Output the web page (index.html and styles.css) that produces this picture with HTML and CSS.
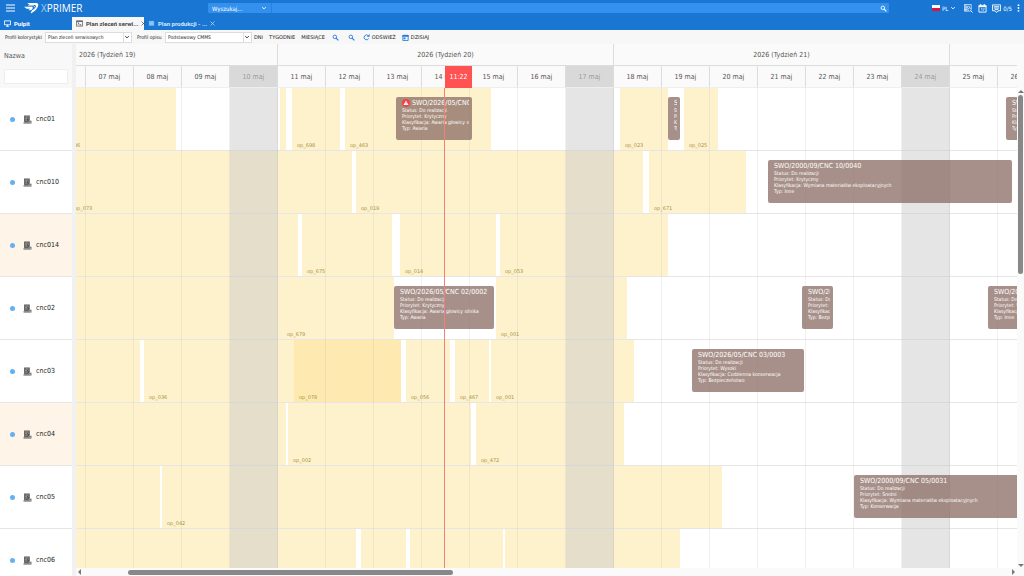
FILE: index.html
```html
<!DOCTYPE html>
<html lang="pl">
<head>
<meta charset="utf-8">
<meta name="viewport" content="width=device-width, initial-scale=1">
<title>Plan zleceń serwisowych</title>
<link rel="stylesheet" href="styles.css">
</head>
<body>
<svg class="defs" aria-hidden="true">
  <symbol id="machine" viewBox="0 0 16 16"><path d="M2 1h10v9h3v5H1v-2h1z" fill="#555"/><path d="M4 3.500h6M4 6h3M9 6h1M4 9h4" stroke="#ddd" stroke-width="1"/><circle cx="12.500" cy="12" r="2" fill="#555" stroke="#ddd"/><path d="M1 13h9" stroke="#ccc"/></symbol>
  <symbol id="chevron" viewBox="0 0 10 10"><path d="M2 3.500l3 3 3-3" fill="none" stroke="currentColor" stroke-width="1.500"/></symbol>
  <symbol id="magnifier" viewBox="0 0 16 16"><circle cx="6.500" cy="6.500" r="4" fill="none" stroke="currentColor" stroke-width="2"/><path d="M9.500 9.500l5 5" stroke="currentColor" stroke-width="2.500"/></symbol>
  <symbol id="cross" viewBox="0 0 10 10"><path d="M1 1l8 8M9 1l-8 8" fill="none" stroke="currentColor" stroke-width="1.300"/></symbol>
</svg>
<div class="app">
  <header class="topbar">
    <div class="brand">
      <button class="icon-btn" aria-label="Menu"><svg class="burger" viewBox="0 0 18 16"><path d="M0 2h18M0 8h18M0 14h18" stroke="#fff" stroke-width="2.400"/></svg></button>
      <svg class="logo" viewBox="0 0 45 36"><path d="M10 3h26c7 0 8 5 6 10-3 9-10 15-20 21l-2-1 4-8c6-3 11-7 12-12 0-3-2-4-5-4H17z" fill="#fff"/><path d="M0 14h22c4 0 5 2 4 5-1 4-4 6-8 6h-5l5-5H8z" fill="#fff"/><path d="M12 11h16c3 0 4 2 3 5" fill="none" stroke="#fff" stroke-width="2"/></svg>
      <span class="brand-name"><span class="brand-x">X</span>PRIMER</span>
    </div>
    <form class="search">
      <span class="search-scope"><select aria-label="Zakres wyszukiwania"><option>Wyszukaj...</option></select><svg class="chev"><use href="#chevron"/></svg></span>
      <input type="search" aria-label="Szukaj">
      <button type="button" class="icon-btn" aria-label="Szukaj"><svg class="ico"><use href="#magnifier"/></svg></button>
    </form>
    <nav class="tools">
      <button class="icon-btn lang"><svg class="flag" viewBox="0 0 8 6"><path fill="#fff" d="M0 0h8v3H0z"/><path fill="#dc143c" d="M0 3h8v3H0z"/></svg>PL<svg class="chev"><use href="#chevron"/></svg></button>
      <button class="icon-btn" aria-label="Raporty"><svg class="tool-ico" viewBox="0 0 20 20"><path d="M1 1h15v10M1 1v15h9M4 5h9M4 8h5M4 11h4M11 8h2M1 13h7M4 1v15" fill="none" stroke="#fff" stroke-width="1.500"/><circle cx="12.500" cy="12.500" r="3.500" fill="#1976d2" stroke="#fff" stroke-width="1.500"/><path d="M15 15l4 4" stroke="#fff" stroke-width="2"/></svg></button>
      <button class="icon-btn" aria-label="Kalendarz"><svg class="tool-ico" viewBox="0 0 20 20"><path d="M2 3h16v15H2zM6 0v4M14 0v4" fill="none" stroke="#fff" stroke-width="2"/><path d="M2 5.500h16" stroke="#fff" stroke-width="3"/><path d="M7 10h2v5M12 10h2l-2 5" fill="none" stroke="#fff" stroke-width="1.300"/></svg></button>
      <button class="icon-btn"><svg class="tool-ico" viewBox="0 0 20 20"><path d="M1 2h18v13h-6l-3 4-3-4H1z" fill="none" stroke="#fff" stroke-width="2"/><path d="M4 6h12M4 9h12M6 12h8" stroke="#fff" stroke-width="2"/></svg>0/5</button>
      <button class="icon-btn" aria-label="Więcej"><svg class="dots" viewBox="0 0 4 14" fill="#fff"><circle cx="2" cy="2" r="1.600"/><circle cx="2" cy="7" r="1.600"/><circle cx="2" cy="12" r="1.600"/></svg></button>
    </nav>
  </header>

  <nav class="tabs">
    <a class="tab tab-home" href="#"><svg class="ico" viewBox="0 0 16 16"><path d="M1 2h14v9H1zM5 14.500h6M8 11v3" fill="none" stroke="currentColor" stroke-width="2"/></svg>Pulpit</a>
    <a class="tab tab-active" href="#"><svg class="ico" viewBox="0 0 16 16"><path d="M1 2h14v12H1z" fill="none" stroke="currentColor" stroke-width="1.500"/><path d="M1 3h14M4 6l3 2-3 2M8 11h4" fill="none" stroke="currentColor" stroke-width="2"/></svg>Plan zleceń serwi...<svg class="close"><use href="#cross"/></svg></a>
    <a class="tab tab-other" href="#"><svg class="ico" viewBox="0 0 16 16"><path d="M2 2h12v11H2z" fill="#78b8f5"/><path d="M4 5h8M4 8h8M4 11h8" stroke="#b4d8fa"/></svg>Plan produkcji - ...<svg class="close"><use href="#cross"/></svg></a>
  </nav>

  <div class="toolbar">
    <label for="colors">Profil kolorystyki</label>
    <span class="pick"><select id="colors"><option>Plan zleceń serwisowych</option></select><svg class="chev"><use href="#chevron"/></svg></span>
    <label for="desc" class="second">Profil opisu</label>
    <span class="pick"><select id="desc"><option>Podstawowy CMMS</option></select><svg class="chev"><use href="#chevron"/></svg></span>
    <div class="actions">
      <button>DNI</button><button>TYGODNIE</button><button>MIESIĄCE</button>
      <button class="zoom" aria-label="Powiększ"><svg class="ico blue"><use href="#magnifier"/></svg></button>
      <button class="zoom" aria-label="Pomniejsz"><svg class="ico blue"><use href="#magnifier"/></svg></button>
      <button><svg class="ico blue" viewBox="0 0 16 16"><path d="M13 10a5.500 5.500 0 1 1-1-6" fill="none" stroke="currentColor" stroke-width="2"/><path d="M9 6h6V0z" fill="currentColor"/></svg>ODŚWIEŻ</button>
      <button><svg class="ico blue" viewBox="0 0 16 16"><path d="M2 3h12v12H2z" fill="none" stroke="currentColor" stroke-width="2"/><path d="M1 2h14v4H1zM4 8h4v4H4z" fill="currentColor"/></svg>DZISIAJ</button>
    </div>
  </div>

  <main class="gantt">
    <aside class="side">
      <div class="side-head"><label for="name">Nazwa</label><input id="name" type="text"></div>
      <ul class="machines">
        <li><i></i><svg><use href="#machine"/></svg>cnc01</li>
        <li><i></i><svg><use href="#machine"/></svg>cnc010</li>
        <li class="warm"><i></i><svg><use href="#machine"/></svg>cnc014</li>
        <li><i></i><svg><use href="#machine"/></svg>cnc02</li>
        <li><i></i><svg><use href="#machine"/></svg>cnc03</li>
        <li class="warm"><i></i><svg><use href="#machine"/></svg>cnc04</li>
        <li><i></i><svg><use href="#machine"/></svg>cnc05</li>
        <li><i></i><svg><use href="#machine"/></svg>cnc06</li>
      </ul>
    </aside>
    <div class="splitter"></div>
    <section class="timeline">
      <div class="scale">
        <div class="weeks"><span class="first">2026 (Tydzień 19)</span><span>2026 (Tydzień 20)</span><span>2026 (Tydzień 21)</span><span></span></div>
        <div class="days">
          <span class="part"></span><span>07 maj</span><span>08 maj</span><span>09 maj</span><span class="off">10 maj</span><span>11 maj</span><span>12 maj</span><span>13 maj</span><span>14 maj</span><span>15 maj</span><span>16 maj</span><span class="off">17 maj</span><span>18 maj</span><span>19 maj</span><span>20 maj</span><span>21 maj</span><span>22 maj</span><span>23 maj</span><span class="off">24 maj</span><span>25 maj</span><span>26 maj</span>
        </div>
        <time class="now-label">11:22</time>
      </div>
      <div class="lanes">
        <div class="lane">
          <div class="op" style="left:-19px;width:119px">op_036</div>
          <div class="op" style="left:204px;width:6px"></div>
          <div class="op" style="left:216px;width:48px">op_698</div>
          <div class="op" style="left:269px;width:146px">op_463</div>
          <div class="op" style="left:544px;width:48px">op_023</div>
          <div class="op" style="left:608px;width:34px">op_025</div>
          <article class="order" style="left:320px;width:76px"><h3><svg class="alert" viewBox="0 0 16 16"><circle cx="8" cy="8" r="8" fill="#ef4444"/><path d="M8 3l5 9H3z" fill="#fff"/><path d="M8 6v3M8 10v1" stroke="#ef4444"/></svg>SWO/2026/05/CNC 01/0001</h3><p>Status: Do realizacji</p><p>Priorytet: Krytyczny</p><p>Klasyfikacja: Awaria głowicy silnika</p><p>Typ: Awaria</p></article>
          <article class="order" style="left:592px;width:12px"><h3>SWO/2026/05/CNC 01/0002</h3><p>Status: Do realizacji</p><p>Priorytet: Wysoki</p><p>Klasyfikacja: Awaria</p><p>Typ: Awaria</p></article>
          <article class="order" style="left:930px;width:60px"><h3>SWO/2026/05/CNC 01/0003</h3><p>Status: Do realizacji</p><p>Priorytet: Wysoki</p><p>Klasyfikacja: Awaria</p><p>Typ: Inne</p></article>
        </div>
        <div class="lane">
          <div class="op" style="left:-7px;width:283px">op_073</div>
          <div class="op" style="left:280px;width:287px">op_019</div>
          <div class="op" style="left:573px;width:97px">op_671</div>
          <article class="order" style="left:692px;width:244px"><h3>SWO/2000/09/CNC 10/0040</h3><p>Status: Do realizacji</p><p>Priorytet: Krytyczny</p><p>Klasyfikacja: Wymiana materiałów eksploatacyjnych</p><p>Typ: Inne</p></article>
        </div>
        <div class="lane">
          <div class="op" style="left:0;width:222px"></div>
          <div class="op" style="left:226px;width:90px">op_675</div>
          <div class="op" style="left:324px;width:96px">op_014</div>
          <div class="op" style="left:424px;width:168px">op_053</div>
        </div>
        <div class="lane">
          <div class="op" style="left:0;width:206px"></div>
          <div class="op" style="left:206px;width:112px">op_679</div>
          <div class="op" style="left:420px;width:131px">op_001</div>
          <article class="order" style="left:318px;width:100px"><h3>SWO/2026/05/CNC 02/0002</h3><p>Status: Do realizacji</p><p>Priorytet: Krytyczny</p><p>Klasyfikacja: Awaria głowicy silnika</p><p>Typ: Awaria</p></article>
          <article class="order" style="left:726px;width:31px"><h3>SWO/2026/05/CNC 02/0003</h3><p>Status: Do realizacji</p><p>Priorytet: Wysoki</p><p>Klasyfikacja: Codzienna</p><p>Typ: Bezpieczeństwo</p></article>
          <article class="order" style="left:912px;width:80px"><h3>SWO/2026/05/CNC 02/0004</h3><p>Status: Do realizacji</p><p>Priorytet: Wysoki</p><p>Klasyfikacja: Codzienna</p><p>Typ: Inne</p></article>
        </div>
        <div class="lane">
          <div class="op" style="left:0;width:64px"></div>
          <div class="op" style="left:68px;width:150px">op_036</div>
          <div class="op strong" style="left:218px;width:107px">op_078</div>
          <div class="op" style="left:330px;width:44px">op_056</div>
          <div class="op" style="left:379px;width:34px">op_467</div>
          <div class="op" style="left:415px;width:143px">op_001</div>
          <article class="order" style="left:616px;width:112px"><h3>SWO/2026/05/CNC 03/0003</h3><p>Status: Do realizacji</p><p>Priorytet: Wysoki</p><p>Klasyfikacja: Codzienna konserwacja</p><p>Typ: Bezpieczeństwo</p></article>
        </div>
        <div class="lane">
          <div class="op" style="left:0;width:210px"></div>
          <div class="op" style="left:212px;width:183px">op_002</div>
          <div class="op" style="left:400px;width:148px">op_472</div>
        </div>
        <div class="lane">
          <div class="op" style="left:0;width:84px"></div>
          <div class="op" style="left:86px;width:560px">op_042</div>
          <article class="order" style="left:778px;width:180px"><h3>SWO/2000/09/CNC 05/0031</h3><p>Status: Do realizacji</p><p>Priorytet: Średni</p><p>Klasyfikacja: Wymiana materiałów eksploatacyjnych</p><p>Typ: Konserwacja</p></article>
        </div>
        <div class="lane">
          <div class="op" style="left:0;width:280px"></div>
          <div class="op" style="left:285px;width:45px"></div>
          <div class="op" style="left:334px;width:93px"></div>
          <div class="op" style="left:429px;width:175px"></div>
        </div>
        <div class="day-lines" aria-hidden="true"><span class="part"></span><span></span><span></span><span></span><span class="off"></span><span></span><span></span><span></span><span></span><span></span><span></span><span class="off"></span><span></span><span></span><span></span><span></span><span></span><span></span><span class="off"></span><span></span><span></span></div>
        <div class="now-line"></div>
      </div>
      <div class="hscroll"><span class="arrow left"></span><div class="track"><span class="thumb"></span></div><span class="arrow right"></span></div>
    </section>
    <div class="vscroll"><span class="arrow up"></span><div class="track"><span class="thumb"></span></div><span class="arrow down"></span></div>
  </main>
</div>
</body>
</html>
```
FILE: styles.css
```css
* { box-sizing: border-box; }
:root { --blue: #1976d2; --day: 48px; --row: 63px; --line: #e6e6e6; }
body { margin: 0; font-family: "DejaVu Sans Condensed", "DejaVu Sans", sans-serif; font-size: 7px; color: #555; background: #fafafa; }
button, input, select { font: inherit; color: inherit; border: 0; padding: 0; margin: 0; background: none; appearance: none; outline: 0; }
button { display: flex; align-items: center; gap: 2px; }
a { color: inherit; text-decoration: none; }
.defs { position: absolute; width: 0; height: 0; }
.app { display: flex; flex-direction: column; height: 100vh; overflow: hidden; }
.ico { width: 7px; height: 7px; flex: none; }
.chev { width: 6px; height: 6px; flex: none; }
.blue { color: #1e7be0; }

.topbar { display: flex; align-items: center; height: 16px; background: var(--blue); color: #fff; }
.brand { display: flex; align-items: center; width: 208px; padding-left: 6px; }
.burger { width: 9px; height: 8px; }
.logo { width: 15px; height: 12px; margin-left: 9px; }
.brand-name { margin-left: 2px; font-family: "Open Sans", sans-serif; font-size: 10px; line-height: 12px; }
.brand-x { opacity: .6; }
.search { display: flex; align-items: center; flex: 1; height: 10px; background: #3390ee; border-radius: 1px; padding-right: 2px; }
.search-scope { display: flex; align-items: center; width: 64px; height: 10px; padding: 0 4px; border-right: 1px solid #2583e0; }
.search-scope select, .search input { flex: 1; min-width: 0; }
.search-scope select { font-size: 6px; }
.tools { display: flex; align-items: center; width: 135px; justify-content: flex-end; gap: 5px; padding-right: 4px; font-size: 6px; }
.lang { margin-right: 3px; }
.flag { width: 8px; height: 6px; }
.tool-ico { width: 9px; height: 9px; }
.dots { width: 3px; height: 8px; }

.tabs { display: flex; height: 14px; background: var(--blue); color: #fff; font-family: Roboto, sans-serif; font-size: 6px; font-weight: 700; }
.tab { display: flex; align-items: center; gap: 3px; padding: 0 4px; margin-top: 1px; white-space: nowrap; }
.tab-home { width: 72px; }
.tab-active { width: 72px; padding-right: 3px; background: #f7f7f7; color: #444; }
.tab-other { width: 74px; color: #d6e9fc; }
.close { width: 5px; height: 5px; margin-left: auto; flex: none; }

.toolbar { display: flex; align-items: center; height: 14px; padding-left: 5px; background: #f7f7f7; color: #222; font-size: 5px; }
.toolbar label { width: 40px; white-space: nowrap; }
.toolbar .second { width: 28px; margin-left: 5px; }
.pick { display: flex; align-items: center; width: 87px; height: 11px; padding: 0 1px; background: #fff; border: 1px solid #ddd; }
.pick select { flex: 1; min-width: 0; height: 9px; padding-left: 1px; border-right: 1px solid #ddd; }
.actions { display: flex; align-items: center; gap: 6px; margin-left: 2px; font-family: "DejaVu Sans", sans-serif; }
.zoom { width: 10px; justify-content: center; }

.gantt { display: grid; grid-template-columns: 72px 4px minmax(0, 1fr) 7px; flex: 1; min-height: 0; }
.side { overflow: hidden; background: #fff; }
.side-head { display: flex; flex-direction: column; justify-content: space-between; height: 44px; padding: 8px 4px 4px; background: #f8f8f8; }
.side-head input { height: 15px; background: #fff; border: 1px solid #eee; }
.machines { margin: 0; padding: 0; list-style: none; color: #222; }
.machines li { display: flex; align-items: center; height: var(--row); padding-left: 10px; border-bottom: 1px solid var(--line); }
.machines i { width: 5px; height: 5px; border-radius: 50%; background: #64b0f2; }
.machines svg { width: 9px; height: 9px; margin: 0 4px 0 8px; }
.machines .warm { background: #fff4e8; }
.splitter { background: #f1f1f1; }

.timeline { display: flex; flex-direction: column; min-width: 0; overflow: hidden; background: #fff; }
.scale { position: relative; height: 44px; flex: none; background: #fafafa; overflow: hidden; }
.weeks, .days, .day-lines { display: flex; }
.weeks span { flex: none; width: calc(var(--day) * 7); height: 22px; line-height: 22px; text-align: center; border-right: 1px solid #ddd; border-bottom: 1px solid #ddd; }
.weeks .first { width: 202px; padding-left: 3px; text-align: left; }
.days span { flex: none; width: var(--day); height: 22px; line-height: 22px; text-align: center; border-right: 1px solid #ddd; border-bottom: 1px solid #eee; }
.days .part, .day-lines .part { width: 10px; }
.days .off { background: #d9d9d9; color: #999; }
.now-label { position: absolute; left: 369px; top: 22px; width: 27px; height: 22px; line-height: 22px; text-align: center; color: #fff; background: #ff5252; }

.lanes { position: relative; flex: 1; min-height: 0; overflow: hidden; }
.lane { position: relative; height: var(--row); border-bottom: 1px solid var(--line); }
.op { position: absolute; top: 0; bottom: 0; display: flex; align-items: flex-end; padding: 0 0 2px 5px; font-family: "DejaVu Sans", sans-serif; font-size: 5px; line-height: 6px; color: #a8923f; background: #fef2cd; }
.strong { background: #feeab0; }
.order { position: absolute; z-index: 1; top: 9px; height: 43px; padding: 2px 3px 0 6px; border-radius: 2px; background: rgba(137, 107, 97, .75); color: #fff; }
.order h3, .order p { margin: 0; overflow: hidden; white-space: nowrap; font-size: 5px; line-height: 6px; font-weight: 400; }
.order h3 { display: flex; align-items: center; font-size: 7px; line-height: 8px; }
.alert { width: 8px; height: 8px; margin-right: 2px; flex: none; }
.day-lines { position: absolute; inset: 0; pointer-events: none; }
.day-lines span { flex: none; width: var(--day); border-right: 1px solid rgba(120, 120, 140, .1); }
.day-lines .off { background: rgba(201, 201, 201, .48); }
.now-line { position: absolute; z-index: 2; top: 0; bottom: 0; left: 368px; width: 1px; background: #f47f78; }

.hscroll, .vscroll { display: flex; align-items: center; background: #fafafa; }
.hscroll { height: 8px; flex: none; padding: 0 2px; }
.vscroll { flex-direction: column; padding: 46px 0 9px; }
.track { flex: 1; align-self: stretch; display: flex; align-items: center; }
.vscroll .track { flex-direction: column; }
.hscroll .thumb { width: 35%; height: 5px; margin-left: 5%; border-radius: 3px; background: #888; }
.vscroll .thumb { width: 5px; height: 38%; margin-top: 2px; border-radius: 3px; background: #888; }
.arrow { width: 0; height: 0; border: 3px solid transparent; flex: none; }
.left { border-right-color: #777; border-left-width: 0; }
.right { border-left-color: #777; border-right-width: 0; }
.up { border-bottom-color: #777; border-top-width: 0; }
.down { border-top-color: #777; border-bottom-width: 0; }
```
